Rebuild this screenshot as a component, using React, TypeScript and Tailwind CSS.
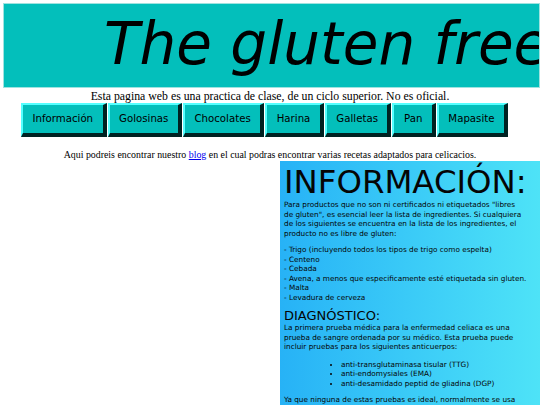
import React from "react";

const menu = ["Información", "Golosinas", "Chocolates", "Harina", "Galletas", "Pan", "Mapasite"];

const App = () => {
  return (
    <div className="min-h-[405px] w-[540px] overflow-hidden bg-white text-black">
      {/* Cabecera */}
      <header className="ml-[3px] mt-[3px] h-[85px] overflow-hidden whitespace-nowrap border border-[#9fe3e0] bg-[#03bfbb] pl-[100px]">
        <h1 className="font-['DejaVu_Sans',sans-serif] text-[58px] italic leading-[80px]">The gluten free world</h1>
      </header>

      <p className="mt-[1px] text-center font-['Liberation_Serif',serif] text-[11.8px] leading-[14px]">
        Esta pagina web es una practica de clase, de un ciclo superior. No es oficial.
      </p>

      {/* Menu */}
      <nav className="flex gap-[1px] pl-[21px]">
        {menu.map((item) => (
          <button
            key={item}
            className="h-[34px] border-b-[4px] border-l-[2px] border-r-[4px] border-t-[2px] border-b-[#022] border-l-[#5ff] border-r-[#022] border-t-[#5ff] bg-[#03bfbb] px-[9.5px] font-['DejaVu_Sans',sans-serif] text-[10.2px]"
          >
            {item}
          </button>
        ))}
      </nav>

      <p className="mt-[12px] text-center font-['Liberation_Serif',serif] text-[9.9px] leading-[12px]">
        Aqui podreis encontrar nuestro{" "}
        <a href="#" className="text-[#00e] underline">
          blog
        </a>{" "}
        en el cual podras encontrar varias recetas adaptados para celicacios.
      </p>

      {/* Panel de informacion */}
      <section className="ml-auto w-[260px] bg-gradient-to-r from-[#27b2f6] to-[#4ee3f7] pb-[10px] pl-[4px] pr-[16px] pt-[3px] font-['DejaVu_Sans',sans-serif] text-[7.3px] leading-[9.5px] text-[#050505]">
        <h2 className="text-[32.4px] leading-[36px]">INFORMACIÓN:</h2>
        <p>
          Para productos que no son ni certificados ni etiquetados "libres de gluten", es esencial leer la lista de
          ingredientes. Si cualquiera de los siguientes se encuentra en la lista de los ingredientes, el producto no
          es libre de gluten:
        </p>
        <p className="mt-[7px] whitespace-nowrap">
          - Trigo (incluyendo todos los tipos de trigo como espelta)
          <br />- Centeno
          <br />- Cebada
          <br />- Avena, a menos que especificamente esté etiquetada sin gluten.
          <br />- Malta
          <br />- Levadura de cerveza
        </p>
        <h3 className="mt-[6px] text-[13px] leading-[15px]">DIAGNÓSTICO:</h3>
        <p>
          La primera prueba médica para la enfermedad celiaca es una prueba de sangre ordenada por su médico. Esta
          prueba puede incluir pruebas para los siguientes anticuerpos:
        </p>
        <ul className="mt-[8px] list-disc pl-[57px]">
          <li>anti-transglutaminasa tisular (TTG)</li>
          <li>anti-endomysiales (EMA)</li>
          <li>anti-desamidado peptid de gliadina (DGP)</li>
        </ul>
        <p className="mt-[7px] whitespace-nowrap">
          Ya que ninguna de estas pruebas es ideal, normalmente se usa
          <br />
          una combinación de ellas para el diagnóstico.
        </p>
      </section>
    </div>
  );
};

export default App;
